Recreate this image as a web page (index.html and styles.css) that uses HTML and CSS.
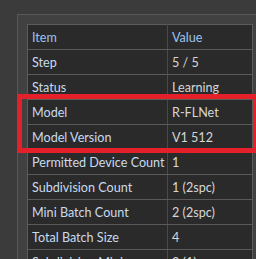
FILE: index.html
```html
<!DOCTYPE html>
<html lang="en">
<head>
<meta charset="UTF-8">
<title>Training Status</title>
<link rel="stylesheet" href="styles.css">
</head>
<body>

<div class="panel">
  <table class="info">
    <tr class="head"><td>Item</td><td>Value</td></tr>
    <tr><td>Step</td><td>5 / 5</td></tr>
    <tr><td>Status</td><td>Learning</td></tr>
    <tr><td>Model</td><td>R-FLNet</td></tr>
    <tr><td>Model Version</td><td>V1 512</td></tr>
    <tr><td>Permitted Device Count</td><td>1</td></tr>
    <tr><td>Subdivision Count</td><td>1 (2spc)</td></tr>
    <tr><td>Mini Batch Count</td><td>2 (2spc)</td></tr>
    <tr><td>Total Batch Size</td><td>4</td></tr>
    <tr><td>Subdivision Mini</td><td>2 (1)</td></tr>
  </table>
  <!-- highlight around the model rows -->
  <div class="mark"></div>
</div>

</body>
</html>
```
FILE: styles.css
```css
html, body {
  margin: 0;
  height: 100%;
  overflow: hidden;
}

body {
  background: #3b3b3b;
  font-family: "Lato", sans-serif;
  font-size: 12.6px;
}

.panel {
  position: relative;
  margin: 14px 0 0 17px;
  width: 260px;
  height: 260px;
  border-top: 1px solid #575757;
  border-left: 1px solid #575757;
  background: #414141;
  padding: 9px 0 0 9px;
}

.info {
  border-collapse: collapse;
  width: 226px;
  background: #2a2a2a;
  border: 1px solid #5c5c5c;
}

.info td {
  height: 23px;
  padding: 1px 0 0 4px;
  border-bottom: 1px solid #5a5a5a;
  color: #c9daee;
  white-space: nowrap;
  overflow: hidden;
  line-height: 23px;
}

.info td:first-child {
  width: 135px;
  max-width: 135px;
  border-right: 1px solid #4a4a4a;
}

.info td + td {
  color: #d6d6d6;
}

.info .head td {
  color: #9cc4f0;
}

.mark {
  position: absolute;
  left: -1px;
  top: 79px;
  width: 231px;
  height: 49px;
  border: 5px solid #e4202b;
}
```
